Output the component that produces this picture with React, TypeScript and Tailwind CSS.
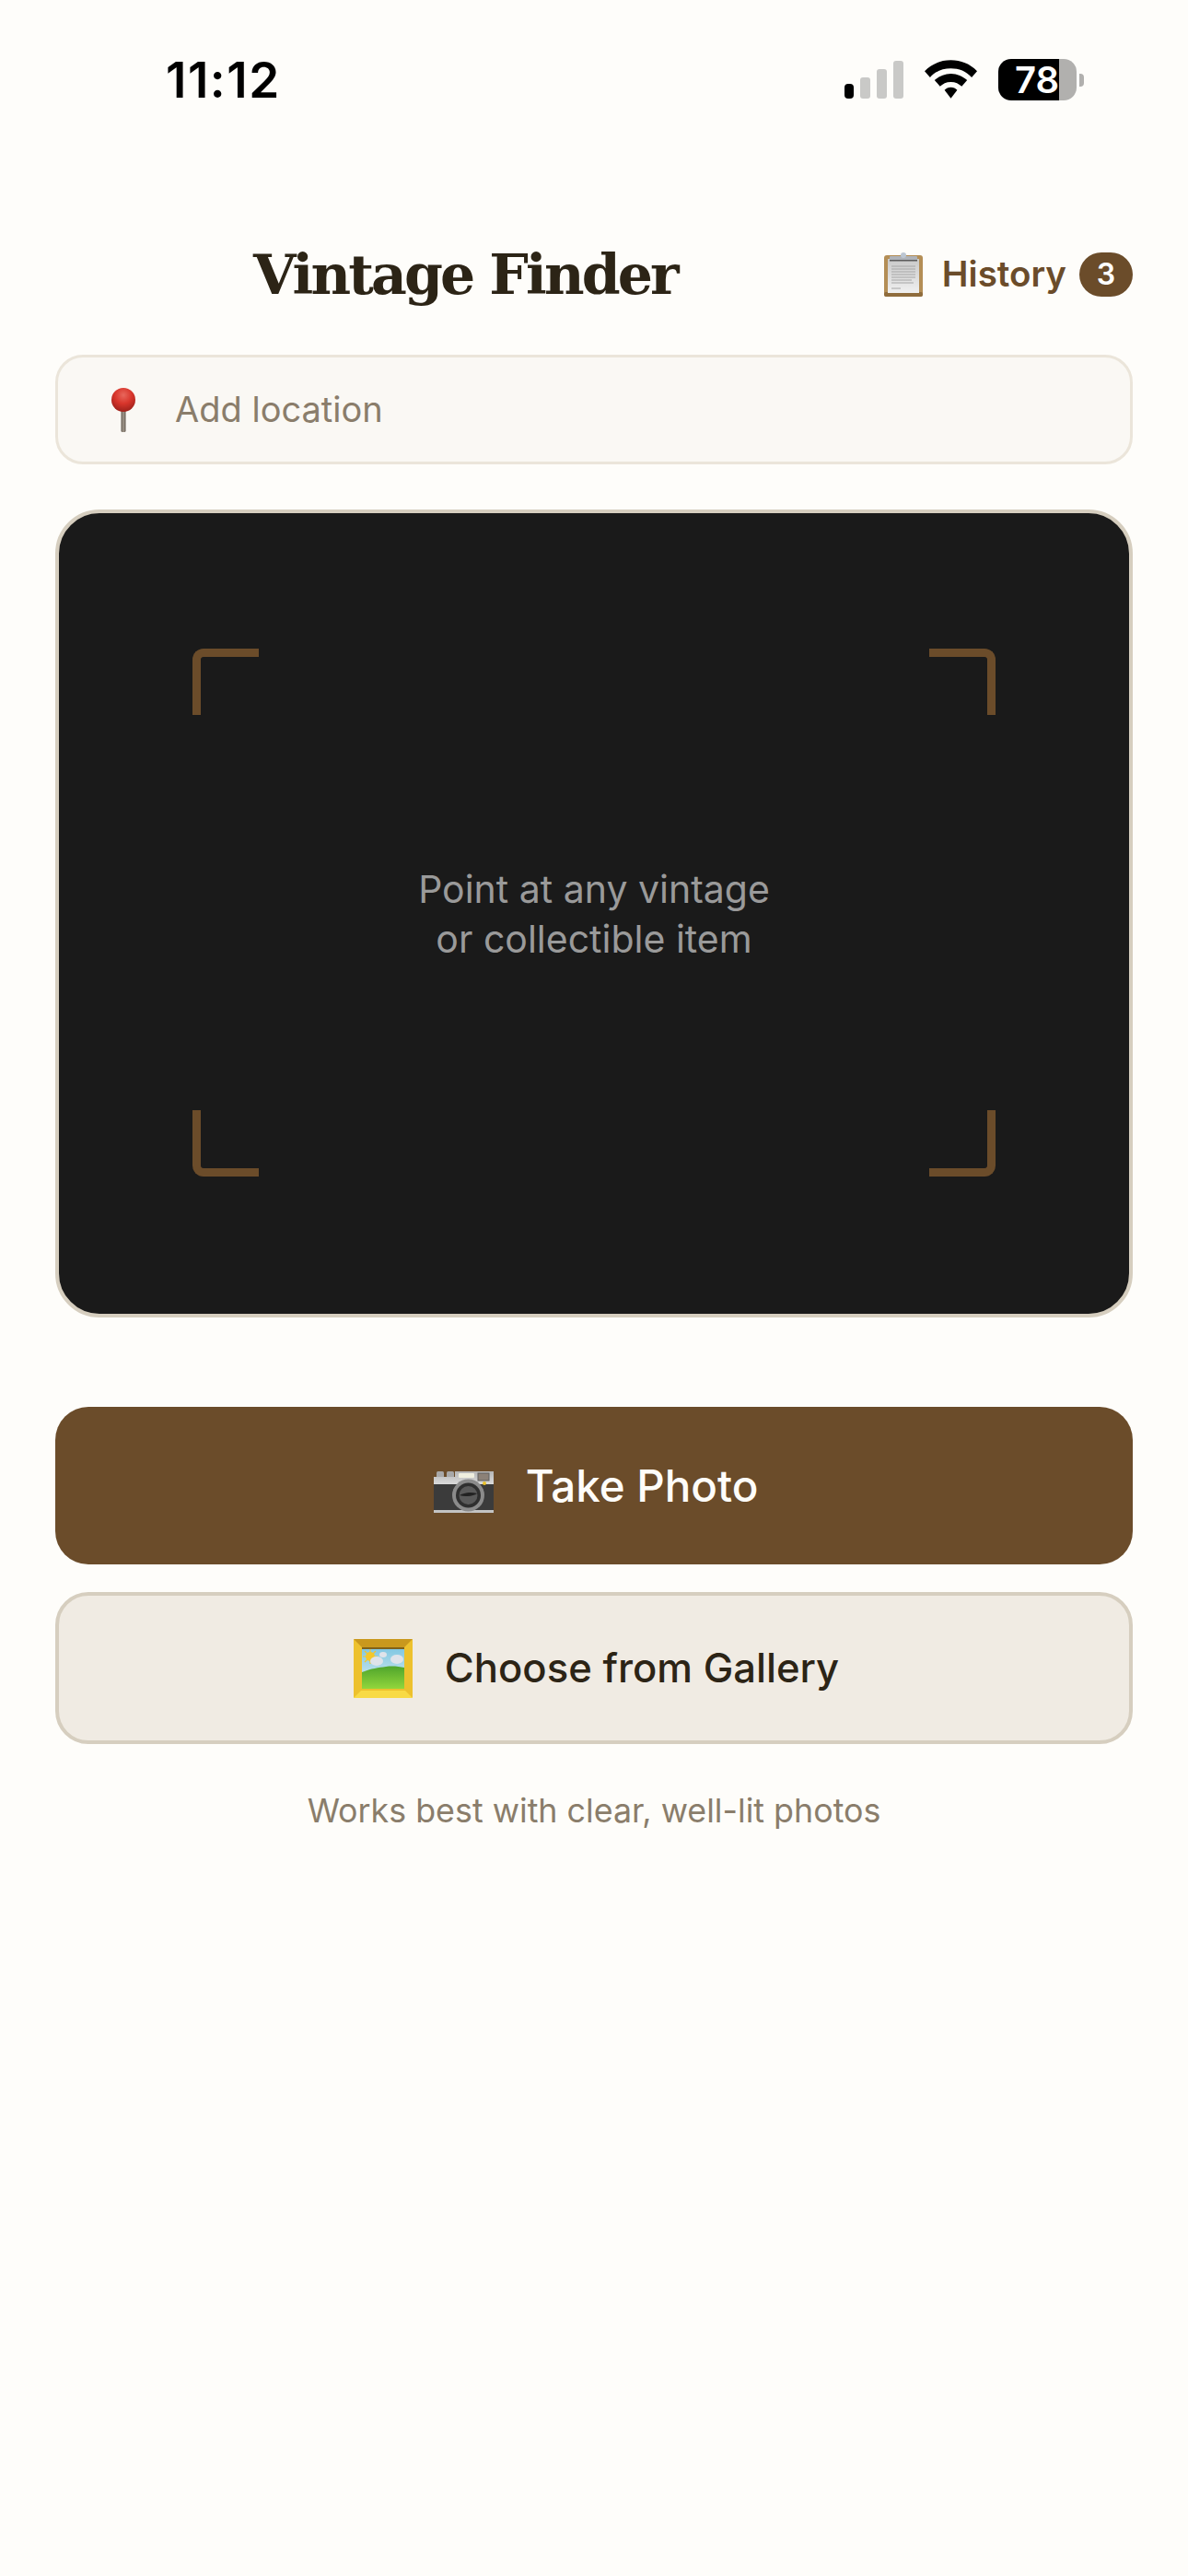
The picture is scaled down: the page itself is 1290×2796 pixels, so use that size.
import React from "react";

const inter = { fontFamily: "Inter, sans-serif" };

const PinIcon = () => (
  <svg width="30" height="50" viewBox="0 0 30 50">
    <defs>
      <radialGradient id="pinBall" cx="50%" cy="30%" r="65%">
        <stop offset="0%" stopColor="#e8675c" />
        <stop offset="55%" stopColor="#d8352b" />
        <stop offset="100%" stopColor="#a5241d" />
      </radialGradient>
      <linearGradient id="pinStick" x1="0" y1="0" x2="1" y2="0">
        <stop offset="0%" stopColor="#5f564c" />
        <stop offset="50%" stopColor="#a39a8e" />
        <stop offset="100%" stopColor="#5f564c" />
      </linearGradient>
    </defs>
    <rect x="12.5" y="22" width="5" height="27" rx="1.5" fill="url(#pinStick)" />
    <circle cx="15" cy="14" r="13" fill="url(#pinBall)" />
  </svg>
);

const ClipboardIcon = () => (
  <svg width="42" height="48" viewBox="0 0 42 48">
    <defs>
      <linearGradient id="paper" x1="0" y1="0" x2="0" y2="1">
        <stop offset="0%" stopColor="#c9c9c9" />
        <stop offset="100%" stopColor="#f0f0f0" />
      </linearGradient>
    </defs>
    <rect x="0" y="3" width="42" height="45" rx="3" fill="#b48e55" />
    <rect x="0" y="43" width="42" height="5" rx="2" fill="#8f6c3c" />
    <rect x="4" y="7" width="34" height="37" fill="url(#paper)" />
    <path d="M8 15h26M8 18h26M8 21h26M8 24h26M8 27h26M8 30h22M8 33h24M8 39h10" stroke="#a6a6a6" strokeWidth="1" />
    <rect x="6" y="4" width="30" height="5" rx="1" fill="#aeb2b8" />
    <rect x="6" y="8" width="30" height="1.5" fill="#5c5c5c" />
    <circle cx="21" cy="3" r="3" fill="#bcc6d2" />
  </svg>
);

const CameraIcon = () => (
  <svg width="65" height="45" viewBox="0 0 65 45">
    <defs>
      <linearGradient id="plate" x1="0" y1="0" x2="0" y2="1">
        <stop offset="0%" stopColor="#b5b5b5" />
        <stop offset="100%" stopColor="#dadada" />
      </linearGradient>
    </defs>
    <rect x="3" y="0" width="8" height="7" rx="1.5" fill="#a8a8a8" />
    <rect x="14" y="0" width="8" height="7" rx="1.5" fill="#a8a8a8" />
    <rect x="0" y="14" width="65" height="29" fill="#3b3b3b" />
    <path d="M23 0h42v14H0V6h23z" fill="url(#plate)" />
    <rect x="0" y="42" width="65" height="3" fill="#c4c4c4" />
    <rect x="27" y="2" width="17" height="5" rx="1" fill="#efeede" />
    <rect x="48" y="2" width="12" height="8" fill="#8c8177" stroke="#5f5f5f" strokeWidth="1" />
    <circle cx="37.5" cy="26" r="17.5" fill="#8b8b8b" />
    <circle cx="37.5" cy="26" r="13.5" fill="#2f2f2f" />
    <circle cx="37.5" cy="26" r="10" fill="#5a5a5a" />
    <path d="M28 26c5-3 13-4 19-2-4 3-13 4-19 2z" fill="#222222" />
    <circle cx="55" cy="13" r="2" fill="#e9c22b" />
  </svg>
);

const PictureIcon = () => (
  <svg width="64" height="64" viewBox="0 0 64 64">
    <defs>
      <linearGradient id="sky" x1="0" y1="0" x2="0" y2="1">
        <stop offset="0%" stopColor="#7ec6e2" />
        <stop offset="100%" stopColor="#e2f0ef" />
      </linearGradient>
      <linearGradient id="grass" x1="0" y1="0" x2="0" y2="1">
        <stop offset="0%" stopColor="#4fa52c" />
        <stop offset="100%" stopColor="#92d63c" />
      </linearGradient>
    </defs>
    <rect width="64" height="64" rx="1" fill="#edc12e" />
    <path d="M0 0h64l-9 9H9z" fill="#c9981d" />
    <path d="M0 64h64l-8-8H8z" fill="#f8da45" />
    <rect x="9" y="9" width="46" height="45" fill="url(#sky)" />
    <path d="M9 9h46v2H9z" fill="#80611a" />
    <circle cx="18" cy="19" r="5" fill="#f4c72a" />
    <path d="M18 11v16M10 19h16M12 13l12 12M24 13L12 25" stroke="#f4c72a" strokeWidth="1.2" />
    <ellipse cx="25" cy="24" rx="7" ry="5" fill="#dfe3ea" />
    <ellipse cx="32" cy="17" rx="4" ry="3" fill="#dfe3ea" />
    <ellipse cx="47" cy="22" rx="7" ry="5" fill="#dfe3ea" />
    <path d="M9 36c10-4 18-5 26-6 8-1 14 0 20 1v23H9z" fill="url(#grass)" />
  </svg>
);

const Bracket = ({ className }: { className: string }) => (
  <div className={`absolute w-[72px] h-[72px] border-[#6b4c2a] ${className}`} />
);

export default function App() {
  return (
    <div className="min-h-[2796px] bg-[#fefdfa] flex flex-col" style={inter}>
      {/* status bar */}
      <div className="h-[130px] flex items-start justify-between pl-[180px] pr-[113px] pt-[62px]">
        <span className="text-[53px] leading-[50px] font-semibold text-black tracking-[1.5px]">11:12</span>
        <div className="flex items-start mt-[2px]">
          <div className="flex items-end gap-[7px] h-[41px] mt-[2px]">
            <div className="w-[10px] h-[16px] rounded-[4px] bg-black" />
            <div className="w-[11px] h-[23px] rounded-[3px] bg-[#c9c9c7]" />
            <div className="w-[11px] h-[32px] rounded-[3px] bg-[#c9c9c7]" />
            <div className="w-[11px] h-[41px] rounded-[3px] bg-[#c9c9c7]" />
          </div>
          <svg className="ml-[23px] mt-[1px]" width="57" height="42" viewBox="0 0 58 42">
            <path d="M29 0c11 0 21 4 29 12l-6 7C46 12 38 9 29 9S12 12 6 19l-6-7C8 4 18 0 29 0z" fill="#000" />
            <path d="M29 15c7 0 13 3 18 7l-6 7c-3-3-7-5-12-5s-9 2-12 5l-6-7c5-4 11-7 18-7z" fill="#000" />
            <path d="M29 30c3 0 5 1 7 3l-7 9-7-9c2-2 4-3 7-3z" fill="#000" />
          </svg>
          <div className="ml-[23px] flex items-center">
            <div className="w-[66px] h-[45px] bg-black rounded-l-[14px] flex items-center justify-end">
              <span className="text-[40px] leading-[45px] font-semibold text-white">78</span>
            </div>
            <div className="w-[19px] h-[45px] bg-[#b1b0ae] rounded-r-[14px]" />
            <div className="w-[5px] h-[14px] ml-[3px] bg-[#b1b0ae] rounded-r-[4px]" />
          </div>
        </div>
      </div>

      {/* header */}
      <div className="relative mt-[128px] h-[80px] px-[60px] flex items-center justify-end">
        <h1 className="absolute left-[275px] top-[-2px] text-[60px] leading-[85px] font-bold tracking-[-2.9px] text-[#2c2416] font-['DejaVu_Serif',serif]">
          Vintage Finder
        </h1>
        <div className="flex items-center">
          <ClipboardIcon />
          <span className="ml-[21px] text-[38.5px] font-semibold text-[#6b4c2a]">History</span>
          <span className="ml-[14px] w-[58px] h-[48px] rounded-full bg-[#6b4c2a] text-white text-[32px] font-semibold flex items-center justify-center">
            3
          </span>
        </div>
      </div>

      {/* location */}
      <div className="mx-[60px] mt-[47px] h-[119px] rounded-[30px] border-[3px] border-[#ebe5da] bg-[#faf8f4] flex items-center pl-[56px]">
        <PinIcon />
        <span className="ml-[41px] text-[38px] text-[#8a7d6b]">Add location</span>
      </div>

      {/* viewfinder */}
      <div className="relative mx-[60px] mt-[49px] h-[877px] rounded-[48px] border-[4px] border-[#d6cebf] bg-[#1a1a1a] flex items-center justify-center">
        <Bracket className="left-[145px] top-[147px] border-l-[9px] border-t-[9px] rounded-tl-[12px]" />
        <Bracket className="right-[145px] top-[147px] border-r-[9px] border-t-[9px] rounded-tr-[12px]" />
        <Bracket className="left-[145px] bottom-[149px] border-l-[9px] border-b-[9px] rounded-bl-[12px]" />
        <Bracket className="right-[145px] bottom-[149px] border-r-[9px] border-b-[9px] rounded-br-[12px]" />
        <p className="text-[41px] leading-[54px] text-[#9a9a9a] text-center">
          Point at any vintage
          <br />
          or collectible item
        </p>
      </div>

      {/* actions */}
      <button className="mx-[60px] mt-[97px] h-[171px] rounded-[36px] bg-[#6b4c2a] flex items-center justify-center pl-[4px]">
        <span className="mt-[14px]">
          <CameraIcon />
        </span>
        <span className="ml-[35px] text-[47.5px] font-medium text-[#fefdfa]">Take Photo</span>
      </button>
      <button className="mx-[60px] mt-[30px] h-[165px] rounded-[36px] border-[4px] border-[#d6cebf] bg-[#f0ebe3] flex items-center justify-center pl-[5px]">
        <PictureIcon />
        <span className="ml-[35px] text-[43.6px] font-medium text-[#2c2416]">Choose from Gallery</span>
      </button>
      <p className="mt-[50px] text-center text-[35.8px] leading-[44px] text-[#8a7d6b]">
        Works best with clear, well-lit photos
      </p>
    </div>
  );
}
